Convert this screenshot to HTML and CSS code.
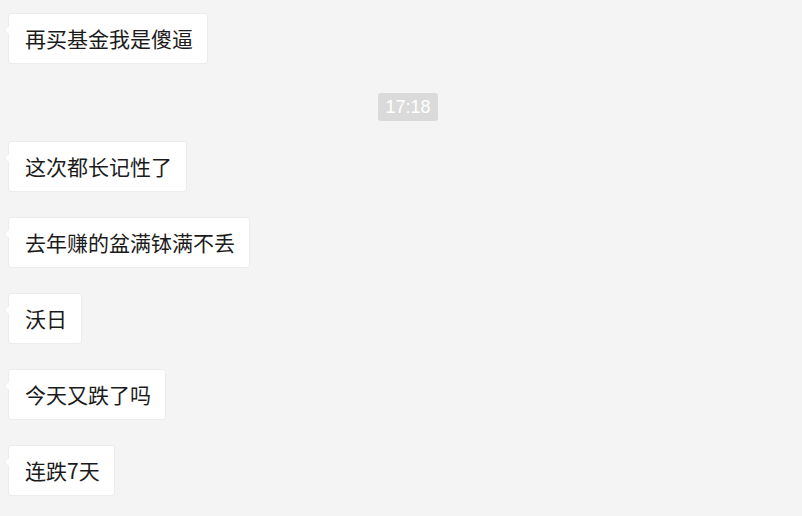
FILE: index.html
```html
<!DOCTYPE html>
<html lang="zh-CN">
<head>
<meta charset="utf-8">
<link rel="stylesheet" href="styles.css">
</head>
<body>
<div class="chat">
  <div class="msg"><div class="bubble">再买基金我是傻逼</div></div>
  <div class="time-row"><span class="time">17:18</span></div>
  <div class="msg"><div class="bubble">这次都长记性了</div></div>
  <div class="msg"><div class="bubble">去年赚的盆满钵满不丢</div></div>
  <div class="msg"><div class="bubble">沃日</div></div>
  <div class="msg"><div class="bubble">今天又跌了吗</div></div>
  <div class="msg"><div class="bubble">连跌7天</div></div>
</div>
</body>
</html>
```

FILE: styles.css
```css
html, body {
  margin: 0;
  padding: 0;
  background: #f4f4f4;
}
body {
  width: 802px;
  height: 516px;
  overflow: hidden;
  font-family: "Noto Sans CJK SC", "Liberation Sans", sans-serif;
}
.chat {
  display: flex;
  flex-direction: column;
  gap: 25px;
  padding-top: 13px;
}
.msg {
  display: flex;
  padding-left: 8px;
}
.bubble {
  position: relative;
  background: #ffffff;
  border: 1px solid #ececec;
  border-radius: 3px;
  padding: 0 14px 0 16px;
  height: 49px;
  line-height: 49px;
  font-size: 21px;
  color: #1b1b1b;
  white-space: nowrap;
}
.bubble::before {
  content: "";
  position: absolute;
  left: -5px;
  top: 12px;
  width: 0;
  height: 0;
  border-top: 4px solid transparent;
  border-bottom: 4px solid transparent;
  border-right: 5px solid #ececec;
}
.bubble::after {
  content: "";
  position: absolute;
  left: -4px;
  top: 12px;
  width: 0;
  height: 0;
  border-top: 4px solid transparent;
  border-bottom: 4px solid transparent;
  border-right: 4px solid #ffffff;
}
.time-row {
  display: flex;
  justify-content: center;
  padding-left: 14px;
  margin-top: 4px;
  margin-bottom: -5px;
}
.time {
  background: #dadada;
  color: #ffffff;
  border-radius: 3px;
  height: 28px;
  line-height: 28px;
  padding: 0 7px;
  font-family: "Liberation Sans", sans-serif;
  font-size: 18px;
}
```
